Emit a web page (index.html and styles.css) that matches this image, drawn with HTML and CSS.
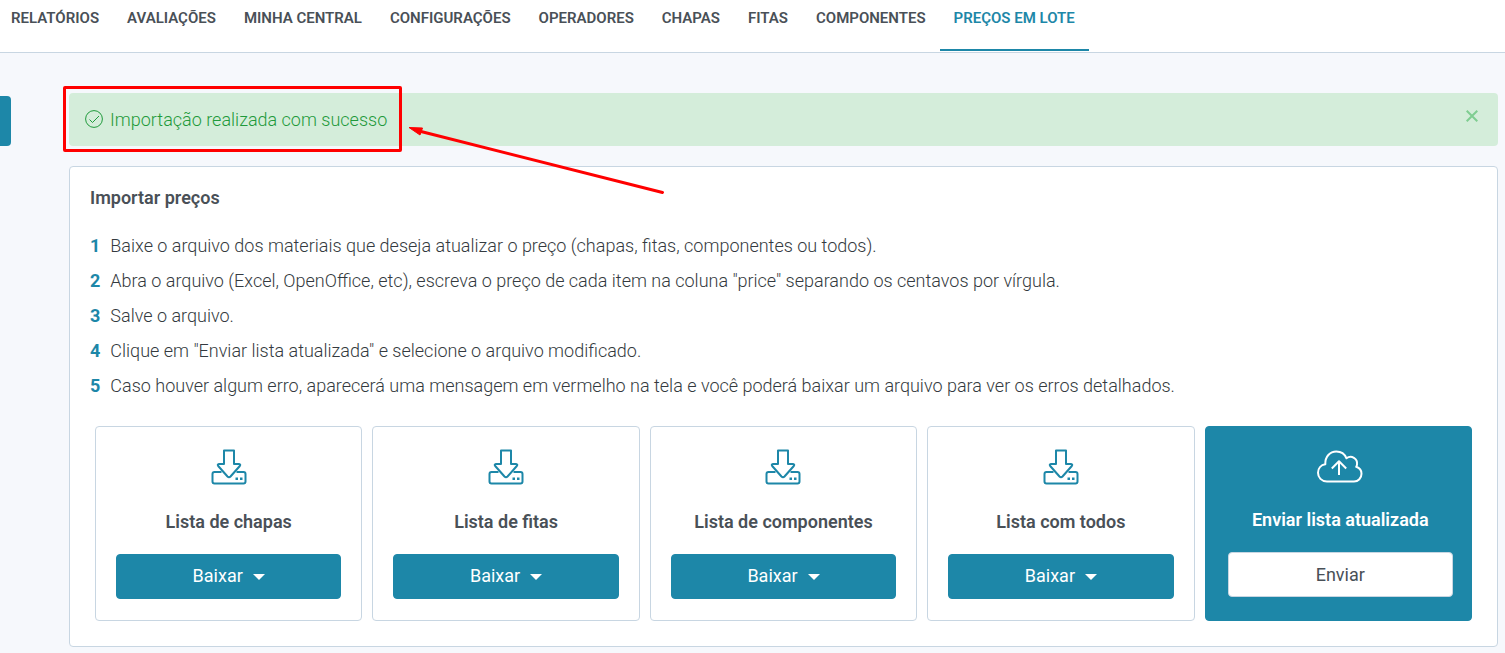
FILE: index.html
```html
<!DOCTYPE html>
<html lang="pt-BR">
<head>
	<meta charset="UTF-8">
	<meta name="viewport" content="width=device-width, initial-scale=1">
	<title>Preços em lote</title>
	<link rel="stylesheet" href="styles.css">
</head>
<body>
	<!-- icons used more than once -->
	<svg class="sprite" aria-hidden="true">
		<symbol id="icon-download" viewBox="0 0 36 36">
			<path d="M13 1.500h10v13.500h5q2 .3.800 2L19.500 27.500q-1.500 1.500-3 0L7.200 17q-1.200-1.700.800-2h5z"/>
			<path d="M10.500 23H3.500q-2 0-2 2v7.500q0 2 2 2h29q2 0 2-2V25q0-2-2-2h-7"/>
			<path class="dots" d="M24.500 28.500h2.500v2.500h-2.500zM29 28.500h2.500v2.500H29z"/>
		</symbol>
	</svg>

	<header class="topnav">
		<nav class="menu">
			<a href="#">RELATÓRIOS</a>
			<a href="#">AVALIAÇÕES</a>
			<a href="#">MINHA CENTRAL</a>
			<a href="#">CONFIGURAÇÕES</a>
			<a href="#">OPERADORES</a>
			<a href="#">CHAPAS</a>
			<a href="#">FITAS</a>
			<a href="#">COMPONENTES</a>
			<a href="#" class="active">PREÇOS EM LOTE</a>
		</nav>
	</header>

	<button class="side-toggle" type="button" aria-label="Abrir menu"></button>

	<main class="content">
		<div class="alert" role="alert">
			<svg class="check" viewBox="0 0 18 20" aria-hidden="true">
				<circle cx="9" cy="9" r="8.400"/>
				<path d="M4.500 9.500l3 3 6.500-6.500"/>
			</svg>
			<p>Importação realizada com sucesso</p>
			<button class="close" type="button" aria-label="Fechar">
				<svg viewBox="0 0 12 12" aria-hidden="true"><path d="M.7.7l10.600 10.600M11.300.7L.7 11.300"/></svg>
			</button>

			<!-- highlight box and arrow over the message -->
			<div class="highlight"></div>
			<svg class="arrow" viewBox="0 0 260 72" aria-hidden="true">
				<path class="shaft" d="M12 8L255.500 69.500"/>
				<path class="head" d="M2 4.500l13.500.5-2.500 7z"/>
			</svg>
		</div>

		<section class="panel">
			<h1>Importar preços</h1>
			<ol class="steps">
				<li>Baixe o arquivo dos materiais que deseja atualizar o preço (chapas, fitas, componentes ou todos).</li>
				<li>Abra o arquivo (Excel, OpenOffice, etc), escreva o preço de cada item na coluna "price" separando os centavos por vírgula.</li>
				<li>Salve o arquivo.</li>
				<li>Clique em "Enviar lista atualizada" e selecione o arquivo modificado.</li>
				<li>Caso houver algum erro, aparecerá uma mensagem em vermelho na tela e você poderá baixar um arquivo para ver os erros detalhados.</li>
			</ol>

			<div class="cards">
				<div class="card">
					<svg class="icon" aria-hidden="true"><use href="#icon-download"/></svg>
					<h2>Lista de chapas</h2>
					<button class="btn" type="button">Baixar <span class="caret"></span></button>
				</div>
				<div class="card">
					<svg class="icon" aria-hidden="true"><use href="#icon-download"/></svg>
					<h2>Lista de fitas</h2>
					<button class="btn" type="button">Baixar <span class="caret"></span></button>
				</div>
				<div class="card">
					<svg class="icon" aria-hidden="true"><use href="#icon-download"/></svg>
					<h2>Lista de componentes</h2>
					<button class="btn" type="button">Baixar <span class="caret"></span></button>
				</div>
				<div class="card">
					<svg class="icon" aria-hidden="true"><use href="#icon-download"/></svg>
					<h2>Lista com todos</h2>
					<button class="btn" type="button">Baixar <span class="caret"></span></button>
				</div>
				<div class="card upload">
					<svg class="icon cloud" viewBox="0 0 46 36" aria-hidden="true">
						<path d="M10 34.500C4.500 34.500 1 30.500 1 25.800c0-4.300 3-7.800 7.300-8.500C8 9.500 13 4.500 19.300 4.500c4.700 0 8.500 2.700 10.200 6.800 4.800-3.600 11.400.1 10.500 6.200-.1.900-.4 1.700-.8 2.300 3.300 1 5.300 3.600 5.300 7 0 4.300-3.200 7.700-7.500 7.700z"/>
						<path d="M22 28V14.500M14.800 21.500l7.200-7.200 7.200 7.200"/>
					</svg>
					<h2>Enviar lista atualizada</h2>
					<button class="btn light" type="button">Enviar</button>
				</div>
			</div>
		</section>
	</main>
</body>
</html>
```
FILE: styles.css
```css
* {
	box-sizing: border-box;
}
body {
	margin: 0;
	background-color: #f6f8fc;
	font-family: Roboto, "Liberation Sans", sans-serif;
	font-size: 18px;
	color: #495057;
}
h1, h2, p, ol {
	margin: 0;
	padding: 0;
}
button {
	font: inherit;
	cursor: pointer;
}
svg {
	fill: none;
	stroke: currentColor;
	stroke-linejoin: round;
	flex-shrink: 0;
}
.sprite {
	position: absolute;
	width: 0;
	height: 0;
}

/* top menu */
.topnav {
	background-color: #fff;
	border-bottom: 1px solid #c8d6e2;
	padding-bottom: 1px;
}
.menu {
	display: flex;
	padding-right: 12px;
	margin-left: -3px;
}
.menu a {
	padding: 8px 14px 21px;
	border-bottom: 2px solid transparent;
	font-size: 15px;
	font-weight: 600;
	line-height: 20px;
	color: #495057;
	text-decoration: none;
	white-space: nowrap;
}
.menu a.active {
	color: #1d87a8;
	border-color: #1d87a8;
}

/* tab stuck on the left edge */
.side-toggle {
	position: absolute;
	top: 96px;
	left: 0;
	width: 11px;
	height: 50px;
	padding: 0;
	border: 0;
	border-radius: 0 4px 4px 0;
	background-color: #1d87a8;
}

.content {
	padding: 40px 7px 6px 69px;
}

.alert {
	position: relative;
	display: flex;
	align-items: center;
	gap: 7px;
	margin-bottom: 20px;
	padding: 13px 20px 13px 16px;
	border-radius: 4px;
	background-color: #d4edda;
	color: #1f9a3b;
	font-weight: 300;
	line-height: 27px;
}
.alert .check {
	width: 18px;
	height: 20px;
}
.close {
	display: flex;
	margin-left: auto;
	margin-bottom: 7px;
	padding: 0;
	border: 0;
	background: none;
	color: #7fcd91;
}
.close svg {
	width: 12px;
	height: 12px;
	stroke-width: 2;
}
.highlight {
	position: absolute;
	top: -7px;
	left: -6px;
	width: 339px;
	height: 66px;
	border: 3px solid #f00;
	border-radius: 2px;
}
.arrow {
	position: absolute;
	top: 30px;
	left: 338px;
	width: 260px;
	height: 72px;
	color: #f00;
}
.arrow .shaft {
	stroke-width: 3;
	stroke-linecap: round;
}
.arrow .head {
	fill: #f00;
}

.panel {
	padding: 20px 20px 25px;
	border: 1px solid #c8d6e2;
	border-radius: 4px;
	background-color: #fff;
}
h1, h2 {
	font-size: 18px;
	font-weight: 600;
	line-height: 22px;
}
.steps {
	margin: 19px 0 23px;
	list-style: none;
	counter-reset: step;
}
.steps li {
	display: flex;
	gap: 10px;
	color: #343a40;
	font-weight: 300;
	line-height: 35px;
	counter-increment: step;
}
.steps li::before {
	content: counter(step);
	color: #1d87a8;
	font-weight: 700;
}

.cards {
	display: grid;
	grid-template-columns: repeat(5, 1fr);
	gap: 10px;
	padding: 0 5px;
}
.card {
	display: flex;
	flex-direction: column;
	align-items: center;
	padding: 22px 20px 21px;
	border: 1px solid #c8d6e2;
	border-radius: 4px;
	text-align: center;
}
.icon {
	width: 36px;
	height: 36px;
	color: #1d87a8;
	stroke-width: 2;
}
.dots {
	fill: #1d87a8;
	stroke: none;
}
.card h2 {
	margin: 26px 0 21px;
}
.btn {
	display: flex;
	align-items: center;
	justify-content: center;
	gap: 10px;
	width: 100%;
	height: 45px;
	padding: 0 0 2px;
	border: 1px solid #1d87a8;
	border-radius: 4px;
	background-color: #1d87a8;
	color: #fff;
}
.caret {
	margin-top: 2px;
	border: 6px solid transparent;
	border-top-color: #fff;
	border-bottom: 0;
}

.upload {
	padding: 20px 18px 23px 22px;
	border-color: #1d87a8;
	background-color: #1d87a8;
	color: #fff;
}
.icon.cloud {
	width: 46px;
	color: #fff;
}
.btn.light {
	padding: 0;
	border-color: #c8d6e2;
	background-color: #fff;
	color: #495057;
}
```
